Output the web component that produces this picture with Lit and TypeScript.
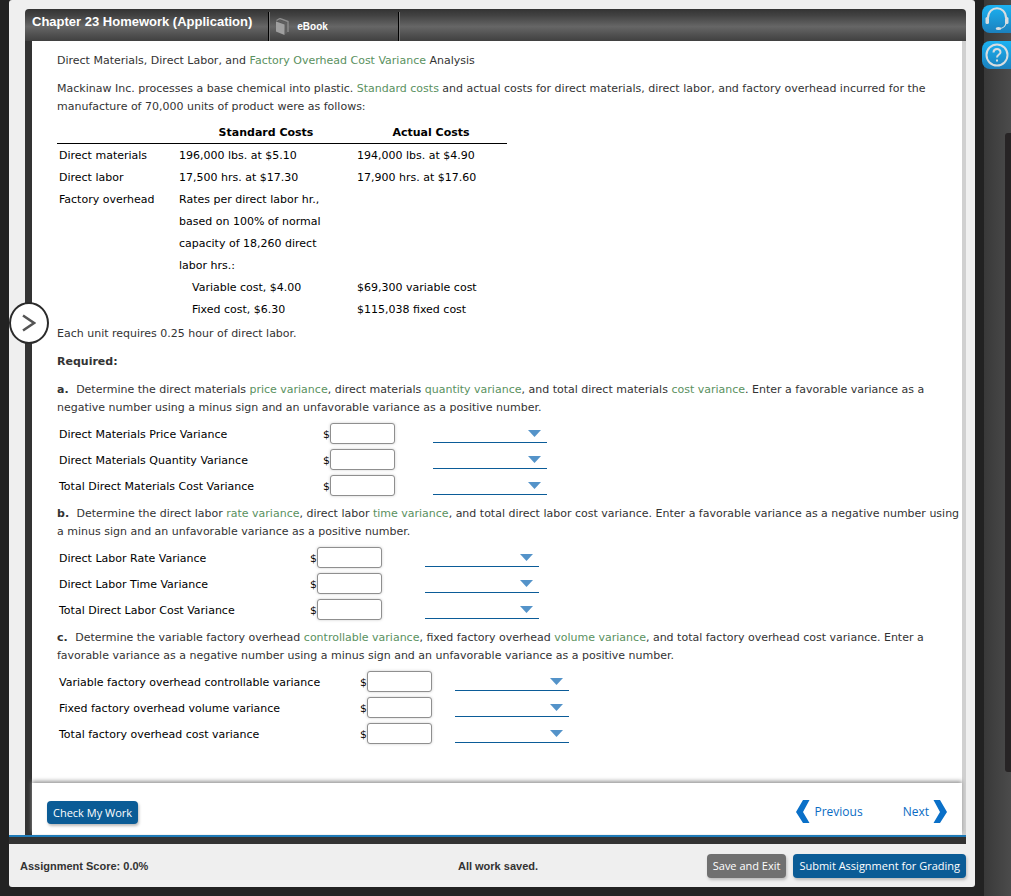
import { LitElement, html, css, svg } from "lit";
import { customElement, property } from "lit/decorators.js";

type Part = string | { link: string };

const link = (text: string): Part => ({ link: text });

const renderParts = (parts: Part[]) =>
  parts.map((p) => (typeof p === "string" ? p : html`<a class="term" href="#">${p.link}</a>`));

interface Question {
  id: string;
  prompt: Part[];
  rows: string[];
}

const QUESTIONS: Question[] = [
  {
    id: "a",
    prompt: [
      "Determine the direct materials ", link("price variance"), ", direct materials ",
      link("quantity variance"), ", and total direct materials ", link("cost variance"),
      ". Enter a favorable variance as a negative number using a minus sign and an unfavorable variance as a positive number.",
    ],
    rows: ["Direct Materials Price Variance", "Direct Materials Quantity Variance", "Total Direct Materials Cost Variance"],
  },
  {
    id: "b",
    prompt: [
      "Determine the direct labor ", link("rate variance"), ", direct labor ",
      link("time variance"),
      ", and total direct labor cost variance. Enter a favorable variance as a negative number using a minus sign and an unfavorable variance as a positive number.",
    ],
    rows: ["Direct Labor Rate Variance", "Direct Labor Time Variance", "Total Direct Labor Cost Variance"],
  },
  {
    id: "c",
    prompt: [
      "Determine the variable factory overhead ", link("controllable variance"), ", fixed factory overhead ",
      link("volume variance"),
      ", and total factory overhead cost variance. Enter a favorable variance as a negative number using a minus sign and an unfavorable variance as a positive number.",
    ],
    rows: ["Variable factory overhead controllable variance", "Fixed factory overhead volume variance", "Total factory overhead cost variance"],
  },
];

const COSTS: { label: string; standard: string; actual: string; indent?: boolean }[] = [
  { label: "Direct materials", standard: "196,000 lbs. at $5.10", actual: "194,000 lbs. at $4.90" },
  { label: "Direct labor", standard: "17,500 hrs. at $17.30", actual: "17,900 hrs. at $17.60" },
  { label: "Factory overhead", standard: "Rates per direct labor hr.,", actual: "" },
  { label: "", standard: "based on 100% of normal", actual: "" },
  { label: "", standard: "capacity of 18,260 direct", actual: "" },
  { label: "", standard: "labor hrs.:", actual: "" },
  { label: "", standard: "Variable cost, $4.00", actual: "$69,300 variable cost", indent: true },
  { label: "", standard: "Fixed cost, $6.30", actual: "$115,038 fixed cost", indent: true },
];

@customElement("variance-form")
class VarianceForm extends LitElement {
  @property({ attribute: false }) question!: Question;

  static styles = css`
    :host { display: block; margin: 5px 0; padding-left: 2px; }
    .row { display: grid; align-items: center; height: 26px; color: #000; }
    .a { grid-template-columns: 264px 110px 114px; }
    .b { grid-template-columns: 251px 115px 114px; }
    .c { grid-template-columns: 301px 95px 114px; }
    .amount { display: flex; align-items: center; }
    .currency { width: 7px; }
    input {
      box-sizing: border-box; width: 65px; height: 21px; padding: 0 4px; margin: 0 0 4px;
      border: 1px solid #8f8f8f; border-radius: 3px; box-shadow: 0 0 3px #ccc;
      font: inherit; background: #fff;
    }
    .pick { display: grid; height: 18px; margin-bottom: 4px; }
    .pick > * { grid-area: 1 / 1; }
    select {
      appearance: none; width: 100%; border: 0; border-bottom: 1px solid #0b5c98;
      border-radius: 0; background: transparent; font: inherit; padding: 0 24px 0 4px; margin: 0;
    }
    svg { justify-self: end; align-self: center; margin-right: 6px; pointer-events: none; }
  `;

  render() {
    const q = this.question;
    return q.rows.map(
      (label, i) => html`
        <div class="row ${q.id}">
          <label for="${q.id}${i}">${label}</label>
          <span class="amount">
            <span class="currency">$</span><input id="${q.id}${i}" type="text" />
          </span>
          <span class="pick">
            <select aria-label="${label}: type">
              <option></option>
              <option label="Favorable" value="f"></option>
              <option label="Unfavorable" value="u"></option>
            </select>
            <svg width="13" height="7" viewBox="0 0 13 7"><path d="M0 0H13L6.5 7Z" fill="#5493c9" /></svg>
          </span>
        </div>
      `
    );
  }
}

@customElement("app-root")
class AppRoot extends LitElement {
  static styles = css`
    :host {
      display: flex; position: relative; box-sizing: border-box; min-height: 100vh;
      background: #222; color: #333;
      font: 11px/18px Verdana, "DejaVu Sans", sans-serif;
    }
    .panel {
      flex: 1; min-width: 0; display: flex; flex-direction: column;
      margin: 0 0 9px 9px; background: #efefef; border-radius: 3px;
    }
    .book { flex: 1; display: flex; flex-direction: column; margin: 9px 9px 0 16px; }
    .bar {
      display: flex; height: 32px; border-radius: 4px 4px 0 0; color: #fff;
      background: linear-gradient(#333, #424242 20%, #666 55%, #4c4c4c 85%, #404040);
      font-family: "Liberation Sans", Arial, sans-serif; font-weight: bold;
    }
    .title { margin: 0; padding: 4px 16px 0 7px; font-size: 13px; line-height: 18px; }
    .tab {
      display: flex; align-items: center; gap: 8px; box-sizing: border-box; width: 130px;
      margin-top: 3px; padding: 0 7px; border-left: 1px solid #000; box-shadow: inset 1px 0 #777;
      color: #fff; text-decoration: none; font-size: 10px;
    }
    .endline { margin-top: 3px; border-left: 1px solid #000; box-shadow: inset 1px 0 #777; width: 2px; }
    .page {
      flex: 1; display: flex; flex-direction: column; background: #fff;
      border-left: 7px solid #333;
      border-right: 4px solid #d0d0d0;
    }
    .content { flex: 1; padding: 11px 2px 30px 25px; }
    p { margin: 0 0 10px; }
    p.tight { margin-bottom: 5px; }
    .term { color: #5a9160; text-decoration: none; }
    .letter { margin-right: 4px; }
    table { border-collapse: collapse; margin: -5px 0 4px; color: #000; }
    th, td { height: 20px; padding: 2px 2px 0; text-align: left; white-space: nowrap; }
    thead th { text-align: center; border-bottom: 1px solid #000; }
    tbody th { font-weight: normal; }
    .c1 { width: 116px; }
    .c2 { width: 174px; }
    .c3 { width: 148px; }
    td.indent { padding-left: 15px; }
    .after-table { margin-top: 5px; }
    .actions {
      display: flex; align-items: center; justify-content: space-between;
      height: 51px; padding: 0 15px; margin-bottom: 1px; background: #fff;
      box-shadow: 0 -2px 4px #999;
      font-family: "Open Sans", sans-serif;
    }
    button { border: 0; cursor: pointer; }
    .btn {
      height: 24px; padding: 0 6px; border-radius: 4px; color: #fff; background: #0b5c96;
      font: 11px/20px "Open Sans", sans-serif; box-shadow: 1px 2px 3px #bbb; white-space: nowrap;
    }
    .check { height: 23px; margin-top: 8px; }
    .gray { background: #707070; }
    .nav { display: flex; gap: 40px; font-size: 12px; margin-top: 6px; }
    .nav a { display: flex; align-items: center; gap: 4px; color: #0a6cc4; text-decoration: none; }
    .rule { height: 7px; margin-right: 9px; border-top: 2px solid #1f7bb8; background: #333; }
    .status {
      display: grid; grid-template-columns: 1fr auto 1fr; align-items: center; height: 43px;
      padding: 0 9px 0 11px; font: bold 11px/16px "Liberation Sans", Arial, sans-serif;
    }
    .saved { padding-left: 10px; }
    .group { display: flex; justify-content: flex-end; gap: 7px; }
    .rail {
      width: 36px; display: flex; flex-direction: column; align-items: flex-end; gap: 8px;
      padding-top: 5px;
      box-sizing: border-box;
      background: linear-gradient(90deg, #222 9px, #393939 9px, #4b4b4b);
    }
    .help {
      display: flex; align-items: center; justify-content: center; width: 29px; height: 28px; padding: 0;
      border-radius: 8px 0 0 8px; background: linear-gradient(#1cb2f2, #1b80bd);
    }
    .thumb { flex: 1; width: 6px; margin: 56px 0 124px; border-radius: 3px 0 0 3px; background: #272425; }
    .opener {
      position: absolute; left: 9px; top: 302px; width: 40px; height: 42px; padding: 0;
      display: grid; place-items: center; border: 2px solid #2b2b2b; border-radius: 50%; background: #fff;
    }
  `;

  private chevron(path: string) {
    return html`<svg width="14" height="24" viewBox="0 0 14 24">${svg`<path d=${path} fill="#0a70c8" />`}</svg>`;
  }

  render() {
    return html`
      <div class="panel">
        <main class="book">
          <header class="bar">
            <h1 class="title">Chapter 23 Homework (Application)</h1>
            <a class="tab" href="#">
              <svg width="13" height="17" viewBox="0 0 13 17">
                <path d="M0.500 2.500L4 0.500L12 3.500V14" fill="none" stroke="#8c8c8c" stroke-width="1.400" />
                <path d="M2 3L4 2L11 4.500V15L9 16V6Z" fill="#606060" />
                <path d="M0 3.500L8.500 6.500V17L0 13.500Z" fill="#a0a0a0" />
              </svg>
              eBook
            </a>
            <span class="endline"></span>
          </header>
          <div class="page">
            <div class="content">
              <p>Direct Materials, Direct Labor, and <a class="term" href="#">Factory Overhead Cost Variance</a> Analysis</p>
              <p>
                Mackinaw Inc. processes a base chemical into plastic.
                <a class="term" href="#">Standard costs</a> and actual costs for direct materials, direct labor, and
                factory overhead incurred for the manufacture of 70,000 units of product were as follows:
              </p>
              <table>
                <thead>
                  <tr><th class="c1"></th><th class="c2">Standard Costs</th><th class="c3">Actual Costs</th></tr>
                </thead>
                <tbody>
                  ${COSTS.map(
                    (r) => html`<tr>
                      <th scope="row">${r.label}</th>
                      <td class=${r.indent ? "indent" : ""}>${r.standard}</td>
                      <td>${r.actual}</td>
                    </tr>`
                  )}
                </tbody>
              </table>
              <p class="after-table">Each unit requires 0.25 hour of direct labor.</p>
              <p><strong>Required:</strong></p>
              ${QUESTIONS.map(
                (q) => html`
                  <p class="tight"><strong class="letter">${q.id}.</strong> ${renderParts(q.prompt)}</p>
                  <variance-form .question=${q}></variance-form>
                `
              )}
            </div>
            <div class="actions">
              <button class="btn check">Check My Work</button>
              <nav class="nav">
                <a href="#">${this.chevron("M7 0H13.500L7 12L13.500 23H7L0 12Z")}Previous</a>
                <a href="#">Next${this.chevron("M7 0H0.500L7 12L0.500 23H7L14 12Z")}</a>
              </nav>
            </div>
          </div>
        </main>
        <div class="rule"></div>
        <footer class="status">
          <span>Assignment Score: 0.0%</span>
          <span class="saved">All work saved.</span>
          <span class="group">
            <button class="btn gray">Save and Exit</button>
            <button class="btn">Submit Assignment for Grading</button>
          </span>
        </footer>
      </div>
      <aside class="rail">
        <button class="help" aria-label="Support">
          <svg width="24" height="24" viewBox="0 0 24 24" fill="none" stroke="#d8dde0" stroke-width="2">
            <path d="M3 11C3 -2 21 -2 21 11" />
            <path d="M21 16C20.500 19 18.500 21 15 21.500" stroke-width="1.200" />
            <rect x="0.500" y="10" width="3.500" height="7" rx="1.500" fill="#d8dde0" stroke="none" />
            <rect x="20" y="10" width="3.500" height="7" rx="1.500" fill="#d8dde0" stroke="none" />
            <ellipse cx="13.500" cy="21.500" rx="2.800" ry="1.600" fill="#d8dde0" stroke="none" />
          </svg>
        </button>
        <button class="help" aria-label="Help">
          <svg width="24" height="24" viewBox="0 0 24 24" fill="none" stroke="#d8dde0" stroke-width="2">
            <circle cx="12" cy="12" r="10.500" />
            <path d="M8.500 9.500C8.500 5 15.500 5 15.500 9.200C15.500 11.500 12 11.500 12 14.500M12 16.500V18.500" />
          </svg>
        </button>
        <span class="thumb"></span>
      </aside>
      <button class="opener" aria-label="Open navigation">
        <svg width="14" height="18" viewBox="0 0 14 18" fill="none" stroke="#555" stroke-width="2.500">
          <path d="M1 1.500L12 9L1 16.500" />
        </svg>
      </button>
    `;
  }
}
